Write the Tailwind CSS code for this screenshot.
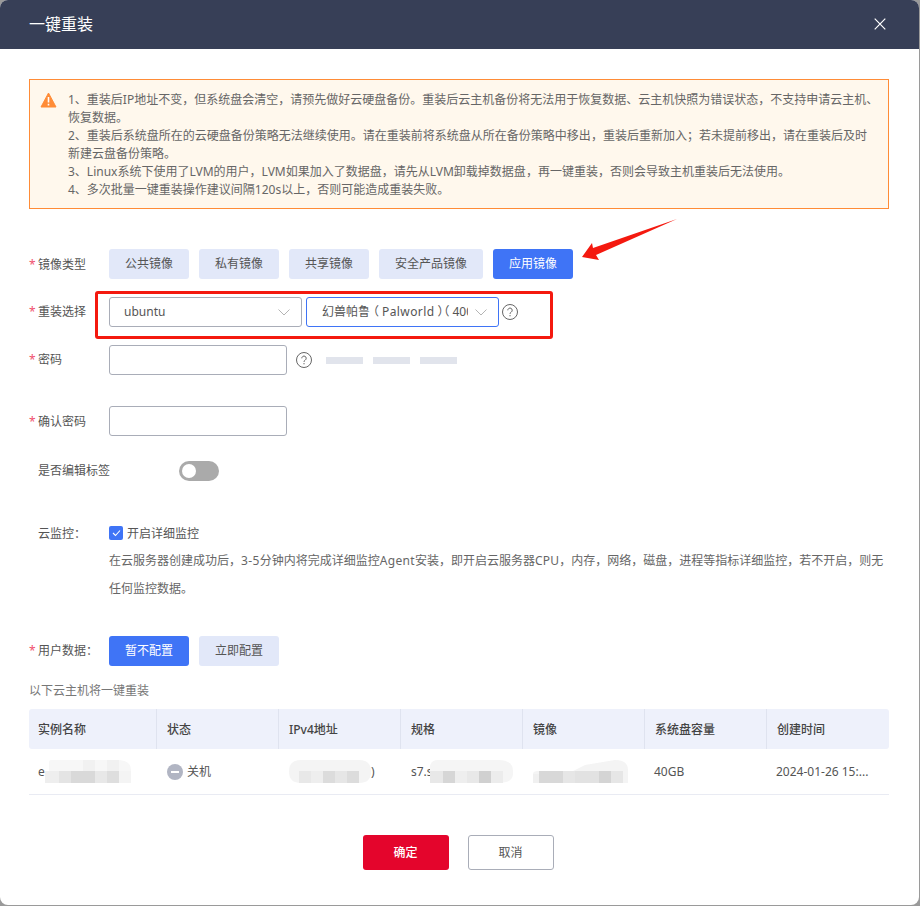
<!DOCTYPE html>
<html lang="zh-CN">
<head>
    <meta charset="UTF-8">
    <title>一键重装</title>
    <script src="https://cdn.jsdelivr.net/npm/@tailwindcss/browser@4"></script>
</head>
<body class="bg-[#9a9a9a] font-['Noto_Sans','Noto_Sans_CJK_SC',sans-serif] text-xs text-[#555]">
    <div class="relative w-[919px] h-[905px] bg-white rounded-lg overflow-hidden">
        <!-- header -->
        <header class="h-[49px] bg-[#373f57] flex items-center justify-between pl-[29px] pr-[33px] pb-[2px] text-white">
            <h1 class="text-base font-normal">一键重装</h1>
            <svg width="12" height="12" viewBox="0 0 12 12" fill="none" stroke="#fff" stroke-width="1.200"><path d="M.7.7l10.600 10.600M11.300.7L.7 11.300"/></svg>
        </header>

        <div class="pl-[29px] w-[889px] box-content">
            <!-- notice -->
            <div class="mt-[30px] h-[130px] w-[860px] bg-[#fff8ed] border border-[#ff8c37] flex pl-[10px] pt-[11px] text-[#666] leading-[18px]">
                <svg class="mt-[1px] shrink-0" width="17" height="16" viewBox="0 0 17 16"><path d="M8.500 1L16 15H1z" fill="#ff8c37" stroke="#ff8c37" stroke-linejoin="round"/><path d="M8.500 5v5.500M8.500 11.800v1.600" stroke="#fff" stroke-width="1.600"/></svg>
                <p class="ml-[11px] whitespace-nowrap">
                    1、重装后IP地址不变<i class="not-italic leading-[0] font-['Noto_Sans_CJK_TC']">，</i>但系统盘会清空<i class="not-italic leading-[0] font-['Noto_Sans_CJK_TC']">，</i>请预先做好云硬盘备份。重装后云主机备份将无法用于恢复数据、云主机快照为错误状态<i class="not-italic leading-[0] font-['Noto_Sans_CJK_TC']">，</i>不支持申请云主机、<br>
                    恢复数据。<br>
                    2、重装后系统盘所在的云硬盘备份策略无法继续使用。请在重装前将系统盘从所在备份策略中移出<i class="not-italic leading-[0] font-['Noto_Sans_CJK_TC']">，</i>重装后重新加入<i class="not-italic leading-[0] font-['Noto_Sans_CJK_TC']">；</i>若未提前移出<i class="not-italic leading-[0] font-['Noto_Sans_CJK_TC']">，</i>请在重装后及时<br>
                    新建云盘备份策略。<br>
                    3、Linux系统下使用了LVM的用户<i class="not-italic leading-[0] font-['Noto_Sans_CJK_TC']">，</i>LVM如果加入了数据盘<i class="not-italic leading-[0] font-['Noto_Sans_CJK_TC']">，</i>请先从LVM卸载掉数据盘<i class="not-italic leading-[0] font-['Noto_Sans_CJK_TC']">，</i>再一键重装<i class="not-italic leading-[0] font-['Noto_Sans_CJK_TC']">，</i>否则会导致主机重装后无法使用。<br>
                    4、多次批量一键重装操作建议间隔120s以上<i class="not-italic leading-[0] font-['Noto_Sans_CJK_TC']">，</i>否则可能造成重装失败。
                </p>
            </div>

            <!-- image type -->
            <div class="mt-[40px] h-[30px] flex items-center">
                <label class="w-[80px] flex shrink-0 pt-[2px]"><span class="w-[9px] text-[#f0506e]">*</span>镜像类型</label>
                <div class="flex gap-[10px]">
                    <button class="w-[80px] h-[30px] rounded-[3px] bg-[#e2e8f9]">公共镜像</button>
                    <button class="w-[80px] h-[30px] rounded-[3px] bg-[#e2e8f9]">私有镜像</button>
                    <button class="w-[80px] h-[30px] rounded-[3px] bg-[#e2e8f9]">共享镜像</button>
                    <button class="w-[104px] h-[30px] rounded-[3px] bg-[#e2e8f9]">安全产品镜像</button>
                    <button class="w-[80px] h-[30px] rounded-[3px] bg-[#3f74f6] text-white">应用镜像</button>
                </div>
            </div>

            <!-- reinstall choice -->
            <div class="mt-[18px] h-[30px] flex items-center">
                <label class="w-[80px] flex shrink-0"><span class="w-[9px] text-[#f0506e]">*</span>重装选择</label>
                <div class="w-[193px] h-[30px] rounded-[3px] border border-[#a9adb8] flex items-center justify-between pl-[14px] pr-[11px]">
                    <span>ubuntu</span>
                    <svg width="12" height="7" viewBox="0 0 12 7" fill="none" stroke="#b4b4b4"><path d="M.5.5L6 6 11.500.5"/></svg>
                </div>
                <div class="ml-[4px] w-[193px] h-[30px] rounded-[3px] border border-[#3f74f6] flex items-center justify-between pl-[15px] pr-[11px]">
                    <span class="w-[146px] overflow-hidden whitespace-nowrap">幻兽帕鲁<i class="not-italic -ml-[3px] mr-[3px]">（</i><span class="tracking-[0.4px]">Palworld</span><i class="not-italic ml-[3px] -mr-[3px]">）</i><i class="not-italic -ml-[3px] mr-[3px]">（</i>4000</span>
                    <svg class="shrink-0" width="12" height="7" viewBox="0 0 12 7" fill="none" stroke="#b4b4b4"><path d="M.5.5L6 6 11.500.5"/></svg>
                </div>
                <svg class="ml-[3px]" width="16" height="16" viewBox="0 0 16 16" fill="none" stroke="#666"><circle cx="8" cy="8" r="7.500"/><path d="M5.800 6.300a2.200 2.200 0 1 1 3.400 1.800c-.8.500-1.200.9-1.200 1.800"/><path d="M8 11v1.300"/></svg>
            </div>

            <!-- password -->
            <div class="mt-[18px] h-[30px] flex items-center">
                <label class="w-[80px] flex shrink-0"><span class="w-[9px] text-[#f0506e]">*</span>密码</label>
                <div class="w-[178px] h-[30px] rounded-[3px] border border-[#a9adb8]"></div>
                <svg class="ml-[9px]" width="16" height="16" viewBox="0 0 16 16" fill="none" stroke="#666"><circle cx="8" cy="8" r="7.500"/><path d="M5.800 6.300a2.200 2.200 0 1 1 3.400 1.800c-.8.500-1.200.9-1.200 1.800"/><path d="M8 11v1.300"/></svg>
                <div class="ml-[14px] flex gap-[10px]">
                    <div class="w-[37px] h-[7px] bg-[#e1e4ec]"></div>
                    <div class="w-[37px] h-[7px] bg-[#e1e4ec]"></div>
                    <div class="w-[37px] h-[7px] bg-[#e1e4ec]"></div>
                </div>
            </div>

            <!-- confirm password -->
            <div class="mt-[31px] h-[30px] flex items-center">
                <label class="w-[80px] flex shrink-0 pt-[2px]"><span class="w-[9px] text-[#f0506e]">*</span>确认密码</label>
                <div class="w-[178px] h-[30px] rounded-[3px] border border-[#a9adb8]"></div>
            </div>

            <!-- tags switch -->
            <div class="mt-[25px] h-[20px] flex items-center">
                <label class="w-[150px] pl-[9px] shrink-0">是否编辑标签</label>
                <div class="w-[40px] h-[20px] rounded-full bg-[#aaaaaa] p-[3px]"><div class="w-[14px] h-[14px] rounded-full bg-white"></div></div>
            </div>

            <!-- monitoring -->
            <div class="mt-[38px] flex leading-[28px]">
                <label class="w-[80px] pl-[9px] pt-[1px] shrink-0">云监控<i class="not-italic leading-[0] font-['Noto_Sans_CJK_TC']">：</i></label>
                <div class="w-[780px]">
                    <div class="h-[28px] flex items-center">
                        <span class="w-[14px] h-[14px] rounded-[2px] bg-[#3f74f6] flex items-center justify-center"><svg width="9" height="8" viewBox="0 0 9 8" fill="none" stroke="#fff" stroke-width="1.100"><path d="M1 4l2.500 2.500L8 1.500"/></svg></span>
                        <span class="ml-[4px] pt-[1px]">开启详细监控</span>
                    </div>
                    <p class="text-[#666] whitespace-nowrap">在云服务器创建成功后<i class="not-italic leading-[0] font-['Noto_Sans_CJK_TC']">，</i><span class="tracking-[0.4px]">3-5</span>分钟内将完成详细监控<span class="tracking-[0.3px]">Agent</span>安装<i class="not-italic leading-[0] font-['Noto_Sans_CJK_TC']">，</i>即开启云服务器<span class="tracking-[0.2px]">CPU</span><i class="not-italic leading-[0] font-['Noto_Sans_CJK_TC']">，</i>内存<i class="not-italic leading-[0] font-['Noto_Sans_CJK_TC']">，</i>网络<i class="not-italic leading-[0] font-['Noto_Sans_CJK_TC']">，</i>磁盘<i class="not-italic leading-[0] font-['Noto_Sans_CJK_TC']">，</i>进程等指标详细监控<i class="not-italic leading-[0] font-['Noto_Sans_CJK_TC']">，</i>若不开启<i class="not-italic leading-[0] font-['Noto_Sans_CJK_TC']">，</i>则无<br>任何监控数据。</p>
                </div>
            </div>

            <!-- user data -->
            <div class="mt-[33px] h-[30px] flex items-center">
                <label class="w-[80px] flex shrink-0"><span class="w-[9px] text-[#f0506e]">*</span><span>用户数据<i class="not-italic leading-[0] font-['Noto_Sans_CJK_TC']">：</i></span></label>
                <div class="flex gap-[10px]">
                    <button class="w-[80px] h-[30px] rounded-[3px] bg-[#3f74f6] text-white">暂不配置</button>
                    <button class="w-[80px] h-[30px] rounded-[3px] bg-[#e2e8f9]">立即配置</button>
                </div>
            </div>

            <p class="mt-[16px] leading-[18px] text-[#777]">以下云主机将一键重装</p>

            <!-- instances table -->
            <div class="mt-[9px] w-[860px]">
                <div class="grid grid-cols-[127px_122px_122px_122px_122px_122px_123px] h-[40px] items-center bg-[#eef1fb] rounded-[3px] font-medium text-[#444]">
                    <div class="pl-[9px] pt-[2px] h-full flex items-center">实例名称</div>
                    <div class="pl-[10px] pt-[2px] h-full flex items-center border-l border-[#dfe3ef]">状态</div>
                    <div class="pl-[10px] pt-[2px] h-full flex items-center border-l border-[#dfe3ef]">IPv4地址</div>
                    <div class="pl-[10px] pt-[2px] h-full flex items-center border-l border-[#dfe3ef]">规格</div>
                    <div class="pl-[10px] pt-[2px] h-full flex items-center border-l border-[#dfe3ef]">镜像</div>
                    <div class="pl-[10px] pt-[2px] h-full flex items-center border-l border-[#dfe3ef]">系统盘容量</div>
                    <div class="pl-[10px] pt-[2px] h-full flex items-center border-l border-[#dfe3ef]">创建时间</div>
                </div>
                <div class="grid grid-cols-[127px_122px_122px_122px_122px_122px_123px] h-[46px] items-center border-b border-[#e9ebf3]">
                    <div class="pl-[9px] flex items-center">
                        <span class="w-[7px]">e</span>
                        <svg width="86" height="23" viewBox="0 0 86 23"><path fill="#f7f7f7" d="M0 11h4V2q0-2 2-2h66q14 0 14 10v13H0z"/><path fill="#f1f1f1" d="M38 0h12v11H38zM62 0h12v11H62z"/><path fill="#eeeeee" d="M0 11h14v12H0z"/><path fill="#e4e4e4" d="M14 11h12v12H14z"/><path fill="#d9d9d9" d="M26 11h24v12H26z"/><path fill="#e8e8e8" d="M50 11h12v12H50z"/><path fill="#dedede" d="M62 11h12v12H62z"/><path fill="#f4f4f4" d="M74 11h12v12H74z"/></svg>
                    </div>
                    <div class="pl-[11px] flex items-center">
                        <svg width="16" height="16" viewBox="0 0 16 16"><circle cx="8" cy="8" r="8" fill="#b1b5c3"/><path d="M4 8h8" stroke="#fff" stroke-width="2"/></svg>
                        <span class="ml-[4px]">关机</span>
                    </div>
                    <div class="pl-[11px] flex items-center">
                        <svg width="82" height="23" viewBox="0 0 82 23"><path fill="#f4f4f4" d="M12 0h58q12 0 12 11.500T70 23H12Q0 23 0 11.500T12 0z"/><path fill="#e8e8e8" d="M10 11h12v12H10z"/><path fill="#eeeeee" d="M22 11h12v12H22z"/><path fill="#dcdcdc" d="M34 11h12v12H34zM58 11h12v12H58z"/><path fill="#e6e6e6" d="M46 11h12v12H46z"/></svg>
                        <span>)</span>
                    </div>
                    <div class="pl-[11px] flex items-center">
                        <span class="w-[19px]">s7.s</span>
                        <svg width="83" height="23" viewBox="0 0 83 23"><path fill="#f5f5f5" d="M8 0h60q15 0 15 11v3q0 9-15 9H0V8q0-8 8-8z"/><path fill="#e8e8e8" d="M0 11h13v12H0z"/><path fill="#d6d6d6" d="M13 11h12v12H13z"/><path fill="#eeeeee" d="M25 11h12v12H25z"/><path fill="#e8e8e8" d="M37 11h12v12H37z"/><path fill="#d0d0d0" d="M49 11h12v12H49z"/><path fill="#ececec" d="M61 11h12v12H61z"/></svg>
                    </div>
                    <div class="pl-[11px] flex items-center">
                        <svg width="95" height="23" viewBox="0 0 95 23"><path fill="#f4f4f4" d="M0 23V14q0-3 5-3h35l12-6 30-5q13 0 13 10v13z"/><path fill="#f0f0f0" d="M0 14h6v9H0z"/><path fill="#d8d8d8" d="M6 11h24v12H6z"/><path fill="#e6e6e6" d="M30 11h12v12H30z"/><path fill="#e2e2e2" d="M42 11h24v12H42z"/><path fill="#d4d4d4" d="M66 11h12v12H66z"/><path fill="#e6e6e6" d="M78 11h12v12H78z"/></svg>
                    </div>
                    <div class="pl-[10px]">40GB</div>
                    <div class="pl-[10px]">2024-01-26 15:...</div>
                </div>
            </div>

            <!-- footer -->
            <div class="mt-[40px] w-[860px] flex justify-center pr-[2px] gap-[19px]">
                <button class="w-[86px] h-[35px] rounded-[3px] bg-[#e4052c] text-white font-medium">确定</button>
                <button class="w-[86px] h-[35px] rounded-[3px] border border-[#a9adb8]">取消</button>
            </div>
        </div>

        <!-- annotations drawn over the screenshot -->
        <div class="absolute left-[95px] top-[291px] w-[458px] h-[48px] border-[3px] border-[#f4190f] rounded-[3px]"></div>
        <svg class="absolute left-0 top-0 pointer-events-none" width="919" height="905"><polygon fill="#f4190f" points="677,219 593,248 592,243 582,257 599,260 596,255"/></svg>
    </div>
</body>
</html>
